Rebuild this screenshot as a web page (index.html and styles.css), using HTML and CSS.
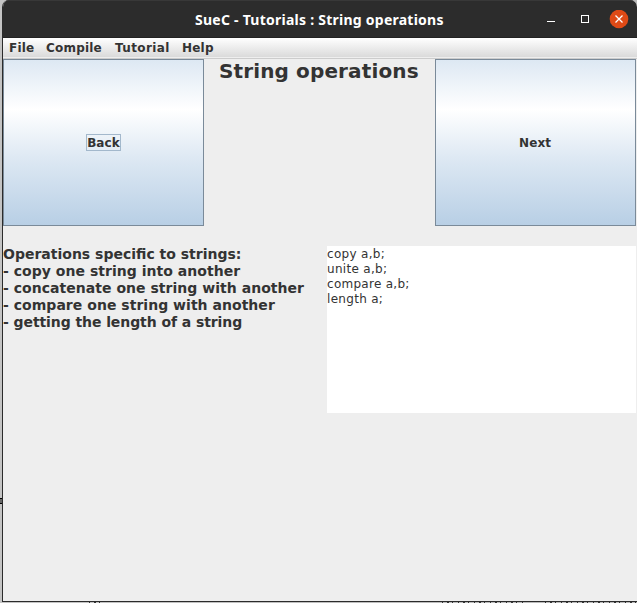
FILE: index.html
```html
<!DOCTYPE html>
<html lang="en">
<head>
<meta charset="utf-8">
<title>SueC - Tutorials : String operations</title>
<link rel="stylesheet" href="styles.css">
</head>
<body>
<div class="window">
  <header class="titlebar">
    <h1 class="caption">SueC - Tutorials : String operations</h1>
    <div class="controls">
      <svg width="86" height="20" viewBox="0 0 86 20">
        <path d="M4 11.500h8" stroke="#fff"/>
        <rect x="38.500" y="5.500" width="7" height="7" fill="none" stroke="#fff"/>
        <circle cx="76" cy="9" r="9.300" fill="#df4a16"/>
        <path d="M72.500 5.500l7 7m0-7l-7 7" stroke="#fff" stroke-width="1.300"/>
      </svg>
    </div>
  </header>
  <nav class="menubar">
    <span class="file">File</span><span class="compile">Compile</span><span class="tutorial">Tutorial</span><span class="help">Help</span>
  </nav>
  <main class="content">
    <section class="top">
      <button class="btn"><span class="focus">Back</span></button>
      <h2 class="heading">String operations</h2>
      <button class="btn"><span class="label">Next</span></button>
    </section>
    <section class="lesson">
      <div class="notes">
        <div class="n1">Operations specific to strings:</div>
        <div class="n2">- copy one string into another</div>
        <div class="n3">- concatenate one string with another</div>
        <div class="n4">- compare one string with another</div>
        <div class="n5">- getting the length of a string</div>
      </div>
      <div class="code">
        <div class="c1">copy a,b;</div>
        <div class="c2">unite a,b;</div>
        <div class="c3">compare a,b;</div>
        <div class="c4">length a;</div>
      </div>
    </section>
  </main>
</div>
<svg class="backdrop" width="637" height="603" viewBox="0 0 637 603">
  <path d="M0 498.500h2M0 503.500h2" stroke="#000"/>
  <path d="M0 499h2v4h-2z" fill="#666"/>
  <path d="M89 602.500h12M442 602.500h84M545 602.500h92" stroke="#333" stroke-dasharray="1 4 2 3 1 5"/>
</svg>
</body>
</html>
```
FILE: styles.css
```css
* { box-sizing: border-box; }
body {
  margin: 0;
  width: 637px;
  height: 603px;
  overflow: hidden;
  padding: 0 0 1px 2px;
  background: linear-gradient(90deg, #c4c4c4, #b9b9b9);
  font-family: "DejaVu Sans", sans-serif;
  color: #333;
}
.window {
  height: 602px;
  border-left: 1px solid #2b2b2b;
  border-bottom: 1px solid #2b2b2b;
  border-radius: 7px 7px 0 0;
  background: #eee;
  overflow: hidden;
}
.titlebar {
  height: 38px;
  background: #2c2c2c;
  border-top: 1px solid #383838;
  border-bottom: 1px solid #222;
  display: grid;
  grid-template-columns: 1fr auto;
  padding-right: 8px;
}
.caption {
  margin: 0;
  padding-left: 192px;
  font: bold 14px/38px "Noto Sans", sans-serif;
  letter-spacing: .25px;
  height: 36px;
  color: #fff;
  white-space: nowrap;
}
.controls { padding-top: 9px; height: 30px; }
.controls svg { display: block; }
.menubar {
  height: 21px;
  padding-left: 6px;
  border-bottom: 1px solid #ccc;
  background: linear-gradient(#fff, #dadada 19px, #eee 19px);
  display: flex;
  font-weight: bold;
  font-size: 12px;
  line-height: 21px;
  white-space: nowrap;
}
.file { width: 37px; letter-spacing: .2px; }
.compile { width: 69px; letter-spacing: .2px; }
.tutorial { width: 67px; letter-spacing: .4px; }
.help { letter-spacing: .2px; }
.top {
  display: grid;
  grid-template-columns: 201px 231px 201px;
  height: 167px;
}
.btn {
  border: 1px solid #7a8a99;
  border-radius: 0;
  padding: 0;
  margin: 0;
  font: bold 12px/17px "DejaVu Sans", sans-serif;
  color: #333;
  background: linear-gradient(#dde8f3, #fff 30%, #dde8f3 60%, #b8cfe5);
  display: flex;
  align-items: center;
  justify-content: center;
}
.focus { width: 35px; height: 17px; border: 1px solid #a3b8cc; letter-spacing: .1px; }
.label { width: 33px; height: 15px; text-align: left; letter-spacing: .1px; }
.heading {
  margin: 0;
  font-size: 20px;
  line-height: 24px;
  padding-left: 15px;
  letter-spacing: .13px;
  white-space: nowrap;
}
.lesson {
  display: grid;
  grid-template-columns: 324px 309px;
  margin-top: 20px;
}
.notes { font-weight: bold; font-size: 14px; line-height: 17px; white-space: nowrap; }
.n2, .n3, .n4 { letter-spacing: .03px; }
.n5 { letter-spacing: -.08px; }
.code {
  height: 167px;
  padding-top: 1px;
  background: #fff;
  font-size: 12px;
  line-height: 15px;
}
.c1, .c4 { letter-spacing: .3px; }
.c2 { letter-spacing: .3px; }
.c3 { letter-spacing: .28px; }
.backdrop { position: absolute; left: 0; top: 0; pointer-events: none; }
```
